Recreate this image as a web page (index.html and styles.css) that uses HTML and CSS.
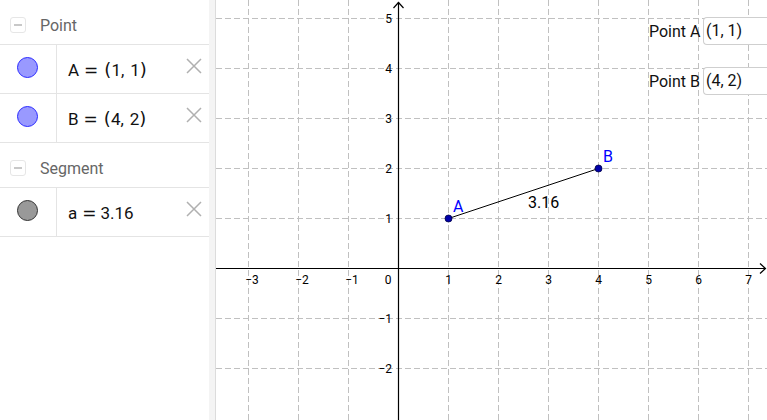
FILE: index.html
```html
<!DOCTYPE html>
<html>
<head>
<meta charset="utf-8">
<link rel="stylesheet" href="styles.css">
</head>
<body>
<div class="app">
  <aside class="algebra">
    <div class="group">
      <span class="toggle"><span class="minus"></span></span>
      <span class="group-title">Point</span>
    </div>
    <div class="item">
      <div class="marble-cell"><span class="marble marble-point"></span></div>
      <div class="formula">A<span class="op">=</span><span class="paren open">(</span>1,<span class="sp"></span>1<span class="paren">)</span></div>
      <svg class="del" viewBox="0 0 18 18"><path d="M2 2L16 16M16 2L2 16"/></svg>
    </div>
    <div class="item">
      <div class="marble-cell"><span class="marble marble-point"></span></div>
      <div class="formula">B<span class="op">=</span><span class="paren open">(</span>4,<span class="sp"></span>2<span class="paren">)</span></div>
      <svg class="del" viewBox="0 0 18 18"><path d="M2 2L16 16M16 2L2 16"/></svg>
    </div>
    <div class="group">
      <span class="toggle"><span class="minus"></span></span>
      <span class="group-title">Segment</span>
    </div>
    <div class="item">
      <div class="marble-cell"><span class="marble marble-seg"></span></div>
      <div class="formula">a<span class="op">=</span>3.16</div>
      <svg class="del" viewBox="0 0 18 18"><path d="M2 2L16 16M16 2L2 16"/></svg>
    </div>
  </aside>
  <div class="splitter"></div>
  <main class="graphics">
    <svg class="plot" viewBox="216 0 551 420" width="551" height="420">
      <g class="grid">
        <path d="M248.5 0V420M298.5 0V420M348.5 0V420M448.5 0V420M498.5 0V420M548.5 0V420M598.5 0V420M648.5 0V420M698.5 0V420M748.5 0V420"/>
        <path d="M216 18.5H767M216 68.5H767M216 118.5H767M216 168.5H767M216 218.5H767M216 318.5H767M216 368.5H767"/>
      </g>
      <g class="axes">
        <path d="M398.5 2V420M216 268.5H766"/>
        <path class="arrow" d="M393.5 8L398.5 2.5L403.5 8M760 263.5L765.5 268.5L760 273.5"/>
      </g>
      <g class="ticks">
        <text x="252" y="284" text-anchor="middle">−3</text>
        <text x="302" y="284" text-anchor="middle">−2</text>
        <text x="352" y="284" text-anchor="middle">−1</text>
        <text x="388" y="284" text-anchor="middle">0</text>
        <text x="448.5" y="284" text-anchor="middle">1</text>
        <text x="498.5" y="284" text-anchor="middle">2</text>
        <text x="548.5" y="284" text-anchor="middle">3</text>
        <text x="598.5" y="284" text-anchor="middle">4</text>
        <text x="648.5" y="284" text-anchor="middle">5</text>
        <text x="698.5" y="284" text-anchor="middle">6</text>
        <text x="748.5" y="284" text-anchor="middle">7</text>
        <text x="392" y="23" text-anchor="end">5</text>
        <text x="392" y="73" text-anchor="end">4</text>
        <text x="392" y="123" text-anchor="end">3</text>
        <text x="392" y="173" text-anchor="end">2</text>
        <text x="392" y="223" text-anchor="end">1</text>
        <text x="392" y="323" text-anchor="end">−1</text>
        <text x="392" y="373" text-anchor="end">−2</text>
      </g>
      <line class="segment" x1="448.5" y1="218.5" x2="598.5" y2="168.5"/>
      <circle class="pt" cx="448.5" cy="218.5" r="3.5"/>
      <circle class="pt" cx="598.5" cy="168.5" r="3.5"/>
      <text class="pt-label" x="453" y="212">A</text>
      <text class="pt-label" x="603" y="162">B</text>
      <text class="seg-label" x="528" y="208">3.16</text>
    </svg>
    <div class="input input-a">
      <span class="input-label">Point A</span>
      <span class="input-box">(1, 1)</span>
    </div>
    <div class="input input-b">
      <span class="input-label">Point B</span>
      <span class="input-box">(4, 2)</span>
    </div>
  </main>
</div>
</body>
</html>
```
FILE: styles.css
```css
* { box-sizing: border-box; }
html, body { margin: 0; padding: 0; }
body {
  width: 767px;
  height: 420px;
  overflow: hidden;
  background: #fff;
  font-family: Roboto, "Liberation Sans", sans-serif;
}
.app {
  display: flex;
  height: 420px;
}
.algebra {
  width: 209px;
  flex: none;
  display: flex;
  flex-direction: column;
  background: #fff;
}
.group {
  height: 45px;
  border-bottom: 1px solid #e4e4e4;
  display: flex;
  align-items: flex-start;
  padding-top: 17px;
  padding-left: 10px;
}
.toggle {
  width: 16px;
  height: 16px;
  border: 1px solid #e6e6e6;
  border-radius: 3px;
  display: flex;
  align-items: center;
  justify-content: center;
}
.minus {
  width: 8px;
  height: 1.5px;
  background: #c8c8c8;
}
.group-title {
  margin-left: 14px;
  font-size: 16px;
  line-height: 16px;
  color: #666;
  margin-top: 1px;
}
.item {
  height: 49px;
  border-bottom: 1px solid #e4e4e4;
  display: flex;
  position: relative;
}
.marble-cell {
  width: 57px;
  flex: none;
  border-right: 1px solid #e4e4e4;
  padding-top: 12px;
  padding-left: 17px;
}
.marble {
  display: block;
  width: 21px;
  height: 21px;
  border-radius: 50%;
}
.marble-point {
  background: #9999ff;
  border: 1.5px solid #2a2aff;
}
.marble-seg {
  background: #999;
  border: 1.5px solid #333;
}
.formula {
  padding-top: 14px;
  padding-left: 11px;
  font-size: 17px;
  line-height: 22px;
  color: #111;
  font-family: Roboto, "Liberation Sans", sans-serif;
  flex: 1;
}
.op {
  display: inline-block;
  font-family: "DejaVu Sans", sans-serif;
  font-size: 17px;
  margin: 0 4px 0 5px;
}
.paren {
  font-family: "DejaVu Sans", sans-serif;
  font-size: 18px;
}
.paren.open {
  margin-left: 2px;
}
.sp {
  display: inline-block;
  width: 6px;
}
.del {
  position: absolute;
  left: 185px;
  top: 12px;
  width: 18px;
  height: 18px;
  fill: none;
  stroke: #b0b0b0;
  stroke-width: 1.5;
}
.splitter {
  width: 7px;
  flex: none;
  background: #f4f4f4;
  border-right: 1px solid #dcdcdc;
}
.graphics {
  flex: 1;
  position: relative;
  overflow: hidden;
}
.plot {
  display: block;
}
.grid path {
  stroke: #c0c0c0;
  stroke-width: 1;
  stroke-dasharray: 6 3;
  fill: none;
}
.axes path {
  stroke: #000;
  stroke-width: 1.2;
  fill: none;
}
.ticks text {
  font-family: Roboto, "Liberation Sans", sans-serif;
  font-size: 12px;
  fill: #000;
}
.segment {
  stroke: #000;
  stroke-width: 1;
}
.pt {
  fill: #0000aa;
  stroke: #000044;
  stroke-width: 0.8;
}
.pt-label {
  font-family: Roboto, "Liberation Sans", sans-serif;
  font-size: 16px;
  fill: #0000ff;
}
.seg-label {
  font-family: Roboto, "Liberation Sans", sans-serif;
  font-size: 16px;
  fill: #000;
}
.input {
  position: absolute;
  left: 433px;
  display: flex;
  align-items: center;
}
.input-a { top: 17px; }
.input-b { top: 67px; }
.input-label {
  font-size: 16px;
  color: #111;
  width: 54px;
}
.input-box {
  width: 80px;
  height: 28px;
  border: 1px solid #cfcfcf;
  border-right: none;
  border-radius: 4px 0 0 4px;
  font-size: 16px;
  line-height: 26px;
  padding-left: 2px;
  color: #111;
  background: #fff;
}
```
